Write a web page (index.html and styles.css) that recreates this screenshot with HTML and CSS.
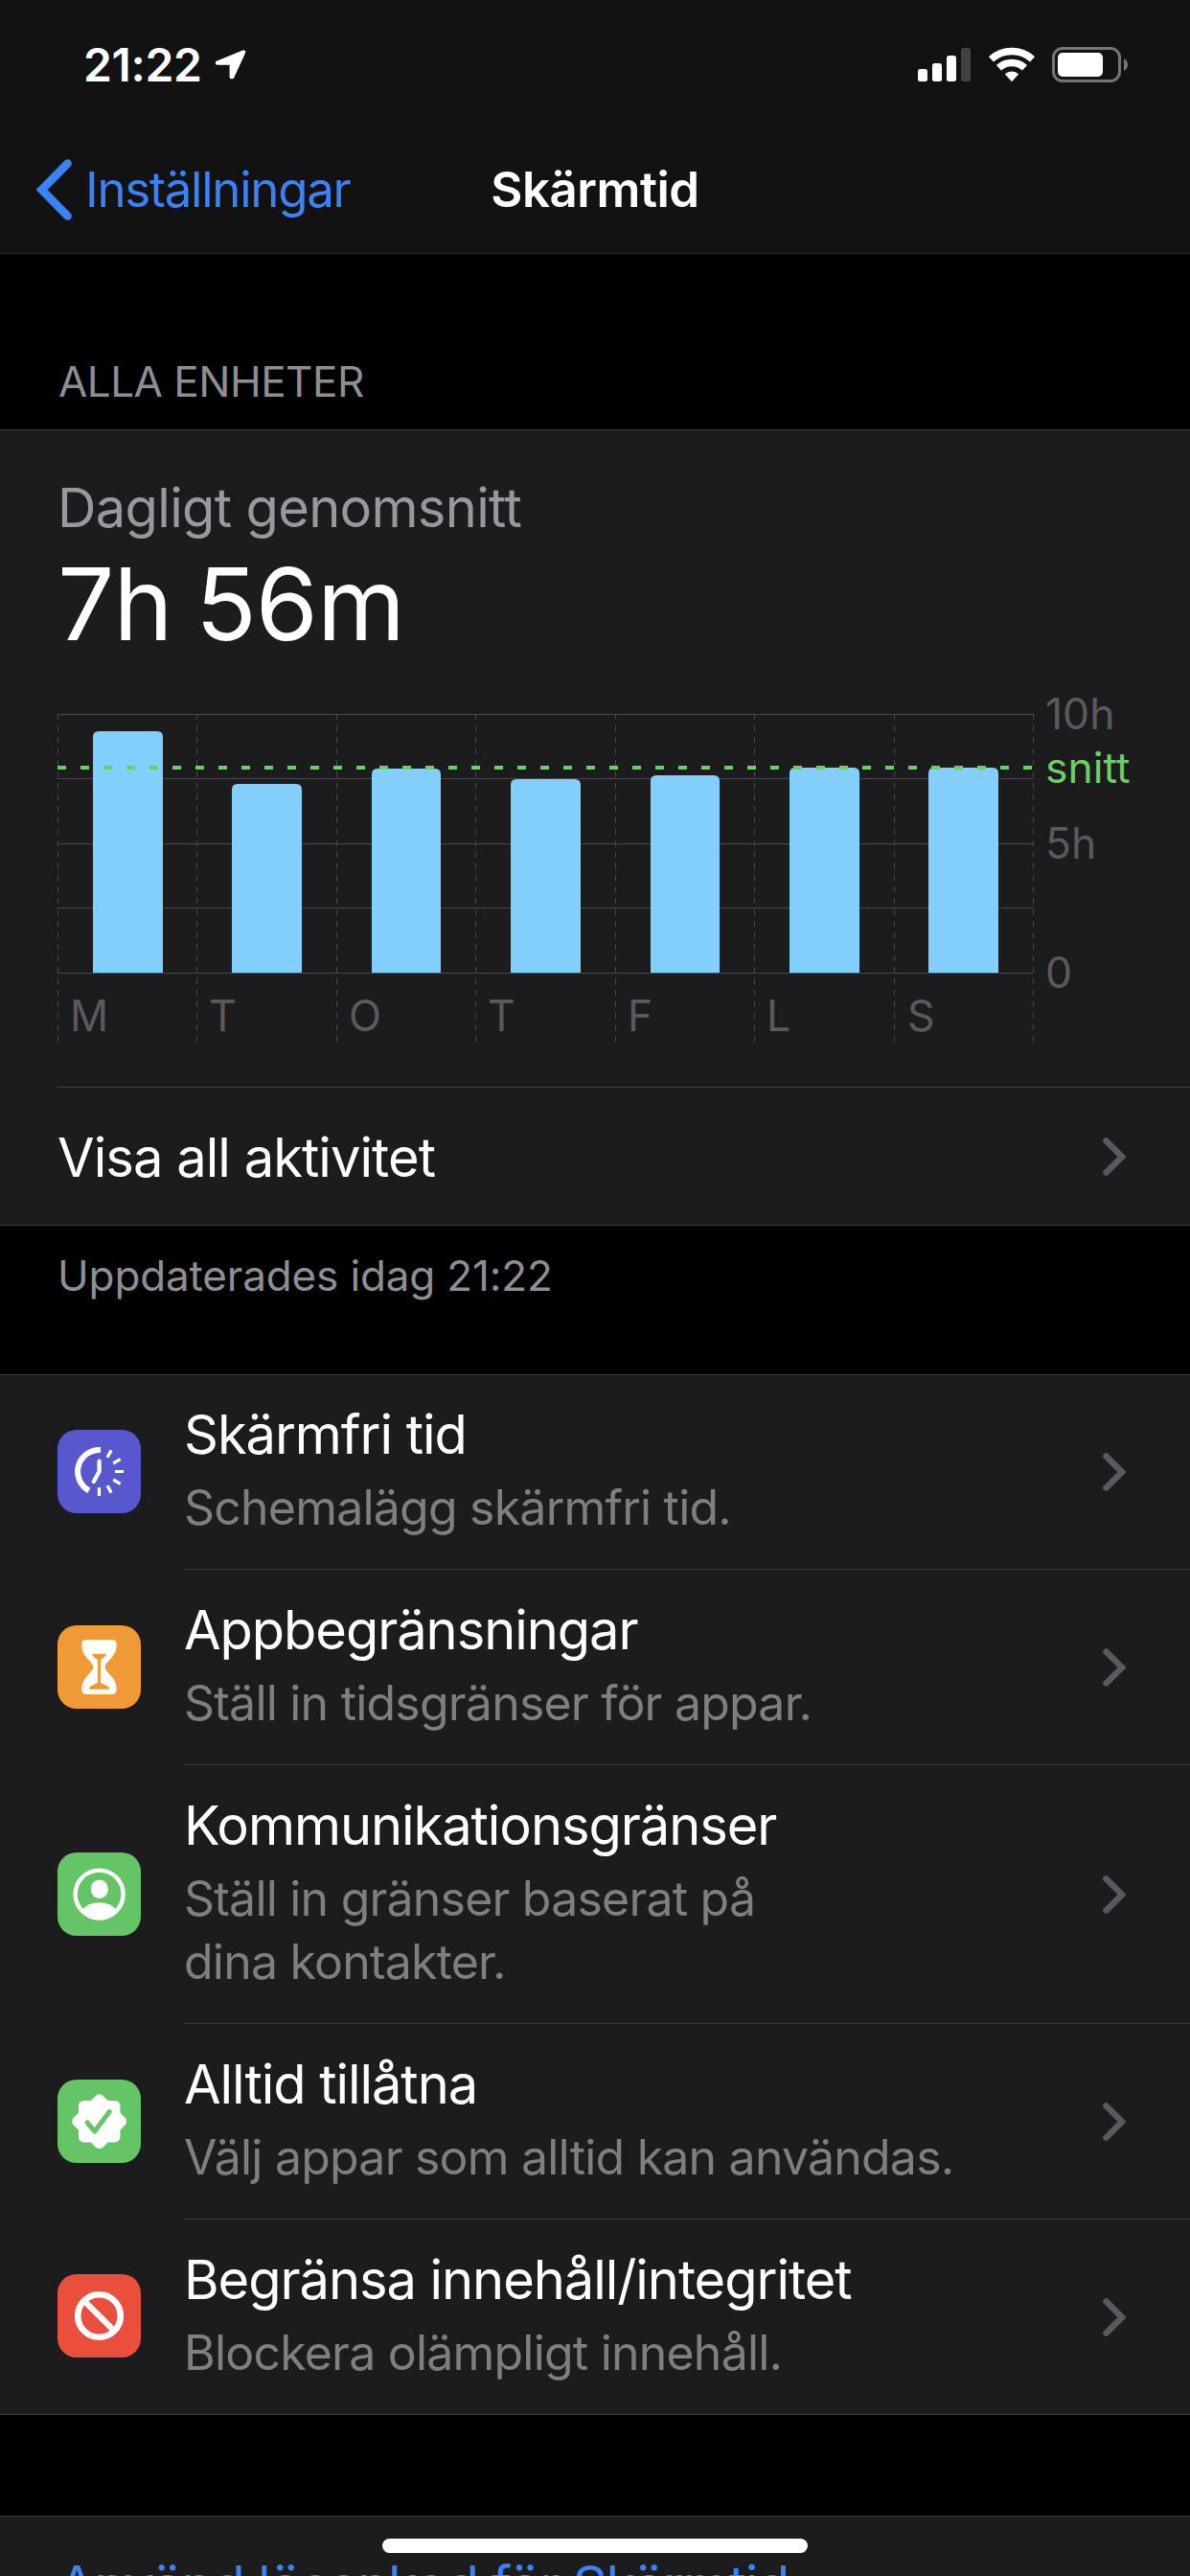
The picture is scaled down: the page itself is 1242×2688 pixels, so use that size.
FILE: index.html
```html
<!DOCTYPE html>
<html lang="sv">
<head>
  <meta charset="UTF-8" />
  <title>Skärmtid</title>
  <link rel="stylesheet" href="styles.css">
</head>
<body>
  <svg class="defs" width="0" height="0">
    <symbol id="chevron" viewBox="0 0 24 40">
      <path d="M3.5 3.5 20 20 3.5 36.5" fill="none" stroke="currentColor" stroke-width="6.6" stroke-linecap="round" stroke-linejoin="miter"/>
    </symbol>
  </svg>

  <header class="top">
    <div class="status-bar">
      <div class="status-left">
        <span class="time">21:22</span>
        <svg class="location" width="33" height="32" viewBox="0 0 33 32">
          <path d="M30 3 2.6 14.2V15H17.3V29.6H18.6L30.6 3.4Z" fill="#fff" stroke="#fff" stroke-width="3.4" stroke-linejoin="round"/>
        </svg>
      </div>
      <div class="status-right">
        <svg width="55" height="37" viewBox="0 0 55 37">
          <rect x="0" y="23" width="10" height="13" rx="2.5" fill="#fff"/>
          <rect x="15" y="17" width="10" height="19" rx="2.5" fill="#fff"/>
          <rect x="30" y="9" width="10" height="27" rx="2.5" fill="#fff"/>
          <rect x="45" y="1" width="10" height="35" rx="2.5" fill="#414141"/>
        </svg>
        <svg width="48" height="37" viewBox="0 0 48 37">
          <g fill="none" stroke="#fff" stroke-width="7.5">
            <path d="M2.4 12.8A32.2 32.2 0 0 1 45.6 12.8"/>
            <path d="M10.5 21.8A19.8 19.8 0 0 1 37.5 21.8"/>
          </g>
          <path d="M24 36.2 16.8 28.3A10.5 10.5 0 0 1 31.2 28.3Z" fill="#fff"/>
        </svg>
        <svg width="79" height="37" viewBox="0 0 79 37">
          <rect x="1.5" y="1.5" width="69" height="34" rx="9.5" fill="none" stroke="#757575" stroke-width="3"/>
          <rect x="6" y="6" width="47" height="25" rx="5" fill="#fff"/>
          <path d="M75 12.3Q79 14 79 18.5T75 24.9Z" fill="#757575"/>
        </svg>
      </div>
    </div>
    <nav class="nav-bar">
      <a class="back">
        <svg width="37" height="64" viewBox="0 0 37 64">
          <path d="M32.6 4.6 5.6 32 32.6 59.4" fill="none" stroke="currentColor" stroke-width="8.6" stroke-linecap="round" stroke-linejoin="miter"/>
        </svg>
        <span>Inställningar</span>
      </a>
      <h1 class="title">Skärmtid</h1>
    </nav>
  </header>

  <main>
    <h2 class="section-header">ALLA ENHETER</h2>

    <section class="group">
      <div class="summary">
        <p class="summary-label">Dagligt genomsnitt</p>
        <p class="summary-value">7h 56m</p>
        <svg class="chart" width="1182" height="370" viewBox="0 0 1182 370">
          <g class="grid">
            <path d="M0 25.5H1019M0 92.5H1019M0 160.5H1019M0 227.5H1019M0 295.5H1019"/>
            <path class="dashed" d="M.5 25V367M145.5 25V367M291.5 25V367M436.5 25V367M582.5 25V367M727.5 25V367M873.5 25V367M1018.5 25V367"/>
          </g>
          <g class="bars">
            <path d="M37 295V49q0-6 6-6h61q6 0 6 6V295z"/>
            <path d="M182 295V104q0-6 6-6h61q6 0 6 6V295z"/>
            <path d="M328 295V88q0-6 6-6h60q6 0 6 6V295z"/>
            <path d="M473 295V99q0-6 6-6h61q6 0 6 6V295z"/>
            <path d="M619 295V95q0-6 6-6h60q6 0 6 6V295z"/>
            <path d="M764 295V87q0-6 6-6h61q6 0 6 6V295z"/>
            <path d="M909 295V87q0-6 6-6h61q6 0 6 6V295z"/>
          </g>
          <path class="average" d="M0 81H1019"/>
          <g class="labels">
            <text x="13" y="356">M</text>
            <text x="158" y="356">T</text>
            <text x="304" y="356">O</text>
            <text x="449" y="356">T</text>
            <text x="595" y="356">F</text>
            <text x="740" y="356">L</text>
            <text x="887" y="356">S</text>
            <text x="1031" y="41">10h</text>
            <text x="1031" y="97" class="average-label">snitt</text>
            <text x="1031" y="176">5h</text>
            <text x="1031" y="311">0</text>
          </g>
        </svg>
      </div>
      <a class="row activity">
        <span class="row-title">Visa all aktivitet</span>
        <svg class="chevron"><use href="#chevron"/></svg>
      </a>
    </section>
    <p class="section-footer">Uppdaterades idag 21:22</p>

    <section class="group list">
      <a class="row">
        <svg class="icon purple" viewBox="0 0 87 87">
          <path d="M45 21.05A22.5 22.5 0 0 0 32.9 63.3" fill="none" stroke="#fff" stroke-width="6"/>
          <path d="M43.6 32.5V43.5L37.8 54" fill="none" stroke="#fff" stroke-width="4.2" stroke-linecap="round" stroke-linejoin="round"/>
          <path d="M52 28.8 56.2 21.4M58.2 35 65.6 30.7M60 43.5H69M58.2 52 65.6 56.3M52 58.2 56.2 65.6M43.5 60.3V69" stroke="#fff" stroke-width="3.2"/>
        </svg>
        <div class="row-body">
          <div class="row-text">
            <span class="row-title">Skärmfri tid</span>
            <span class="row-sub">Schemalägg skärmfri tid.</span>
          </div>
          <svg class="chevron"><use href="#chevron"/></svg>
        </div>
      </a>
      <a class="row">
        <svg class="icon orange" viewBox="0 0 87 87">
          <path d="M30 15H57Q61.7 15 61.7 20C61.7 34 50 37 49.7 43.5 50 50 61.7 53 61.7 67Q61.7 72 57 72H30Q25.3 72 25.3 67C25.3 53 37 50 37.3 43.5 37 37 25.3 34 25.3 20Q25.3 15 30 15Z" fill="#fff"/>
          <path d="M36 29.7H51Q50 33 45 36V60L52.5 63.5Q54 64.5 54 66.8H33Q33 64.5 34.5 63.5L42 60V36Q37 33 36 29.7Z" fill="#f09a37"/>
        </svg>
        <div class="row-body">
          <div class="row-text">
            <span class="row-title">Appbegränsningar</span>
            <span class="row-sub">Ställ in tidsgränser för appar.</span>
          </div>
          <svg class="chevron"><use href="#chevron"/></svg>
        </div>
      </a>
      <a class="row tall">
        <svg class="icon green" viewBox="0 0 87 87">
          <circle cx="43.6" cy="43.6" r="25" fill="none" stroke="#fff" stroke-width="4.4"/>
          <ellipse cx="43.8" cy="38.3" rx="9.1" ry="9.8" fill="#fff"/>
          <path d="M25.5 60Q32 52.2 43.6 52.2T61.7 60A25 25 0 0 1 25.5 60Z" fill="#fff"/>
        </svg>
        <div class="row-body">
          <div class="row-text">
            <span class="row-title">Kommunikationsgränser</span>
            <span class="row-sub">Ställ in gränser baserat på<br>dina kontakter.</span>
          </div>
          <svg class="chevron"><use href="#chevron"/></svg>
        </div>
      </a>
      <a class="row">
        <svg class="icon green" viewBox="0 0 87 87">
          <rect x="22" y="22" width="43.4" height="43.4" rx="5.5" fill="#fff"/>
          <rect x="22" y="22" width="43.4" height="43.4" rx="5.5" fill="#fff" transform="rotate(45 43.7 43.7)"/>
          <path d="M31 44.8 38.8 54 54.2 33.6" fill="none" stroke="#65c466" stroke-width="5" stroke-linecap="round" stroke-linejoin="round"/>
        </svg>
        <div class="row-body">
          <div class="row-text">
            <span class="row-title">Alltid tillåtna</span>
            <span class="row-sub">Välj appar som alltid kan användas.</span>
          </div>
          <svg class="chevron"><use href="#chevron"/></svg>
        </div>
      </a>
      <a class="row">
        <svg class="icon red" viewBox="0 0 87 87">
          <circle cx="43.5" cy="43.5" r="22.3" fill="none" stroke="#fff" stroke-width="6.6"/>
          <path d="M27.7 27.7 59.3 59.3" stroke="#fff" stroke-width="6.2"/>
        </svg>
        <div class="row-body">
          <div class="row-text">
            <span class="row-title">Begränsa innehåll/integritet</span>
            <span class="row-sub">Blockera olämpligt innehåll.</span>
          </div>
          <svg class="chevron"><use href="#chevron"/></svg>
        </div>
      </a>
    </section>

    <section class="group passcode">
      <a class="passcode-link">Använd lösenkod för Skärmtid</a>
    </section>
  </main>

  <div class="home-indicator"></div>
</body>
</html>
```

FILE: styles.css
```css
* {
  box-sizing: border-box;
}

html, body {
  margin: 0;
  padding: 0;
}

body {
  width: 1242px;
  height: 2688px;
  overflow: hidden;
  position: relative;
  background: #000;
  color: #fff;
  font-family: Inter, "Liberation Sans", sans-serif;
}

h1, h2, p {
  margin: 0;
  font-weight: 400;
}

svg {
  display: block;
  flex-shrink: 0;
}

.defs {
  position: absolute;
}

.top {
  height: 265px;
  background: #121212;
  border-bottom: 1px solid #29292a;
}

.status-bar {
  height: 132px;
  display: flex;
  justify-content: space-between;
  align-items: flex-start;
  padding: 0 65px 0 87px;
}

.status-left {
  display: flex;
  gap: 13px;
}

.time {
  font-size: 48px;
  line-height: 135px;
  font-weight: 600;
  letter-spacing: -0.35px;
}

.location {
  margin-top: 51px;
}

.status-right {
  display: flex;
  gap: 18.5px;
  padding-top: 49px;
}

.nav-bar {
  height: 132px;
  display: grid;
  grid-template-columns: 1fr auto 1fr;
  align-items: center;
  padding-bottom: 1px;
  font-size: 51px;
}

.back {
  display: flex;
  align-items: center;
  gap: 14px;
  padding-left: 38px;
  color: #3b82f7;
  letter-spacing: -1.25px;
}

.title {
  font-size: 51px;
  font-weight: 600;
  letter-spacing: -0.5px;
}

.section-header {
  padding: 106px 61px 23px;
  font-size: 44px;
  line-height: 54px;
  letter-spacing: -0.5px;
  color: #8e8e93;
}

.section-footer {
  height: 155px;
  padding: 25px 60px 0;
  font-size: 44px;
  line-height: 54px;
  letter-spacing: -0.15px;
  color: #8e8e93;
}

.group {
  background: #1c1c1e;
  border-top: 1px solid #3d3d41;
  border-bottom: 1px solid #3d3d41;
}

.summary {
  padding: 47px 0 44px 60px;
}

.summary-label {
  font-size: 56px;
  line-height: 68px;
  letter-spacing: -0.66px;
  color: #98989f;
}

.summary-value {
  margin-top: 8px;
  font-size: 105px;
  line-height: 116px;
  letter-spacing: -1px;
  word-spacing: -4px;
}

/* weekly chart */
.chart {
  margin-top: 32px;
}

.grid {
  fill: none;
  stroke: #48484a;
  stroke-width: 1;
}

.dashed {
  stroke-dasharray: 6 6;
}

.bars {
  fill: #82cffd;
}

.average {
  stroke: #6bce67;
  stroke-width: 4;
  stroke-dasharray: 9 15;
}

.labels {
  font-size: 44.5px;
  fill: #5a5a5e;
}

.average-label {
  fill: #6bd067;
}

/* rows */
.row {
  display: flex;
  align-items: center;
  height: 204px;
  padding-left: 60px;
}

.activity {
  height: 144px;
  margin-left: 60px;
  padding: 0 67px 0 0;
  justify-content: space-between;
  border-top: 1px solid #3d3d41;
}

.activity .row-title {
  padding-top: 2px;
  letter-spacing: -0.95px;
}

.list .row:first-child {
  height: 203px;
}

.list .row.tall {
  height: 270px;
}

.row-body {
  flex: 1;
  height: 100%;
  margin-left: 45px;
  padding: 0 67px 0 0;
  display: flex;
  align-items: center;
  justify-content: space-between;
  border-bottom: 1px solid #3a3a3c;
}

.list .row:last-child,
.list .row:last-child .row-body {
  height: 203px;
  border-bottom: none;
}

.row-text {
  display: flex;
  flex-direction: column;
  gap: 10px;
  padding-bottom: 2px;
}

.row-title {
  font-size: 56px;
  line-height: 66px;
  letter-spacing: -1.05px;
}

.row-sub {
  font-size: 50px;
  line-height: 66px;
  letter-spacing: -0.79px;
  color: #7f7f7f;
}

.chevron {
  width: 24px;
  height: 40px;
  color: #5a5a5e;
}

.icon {
  width: 87px;
  height: 87px;
  margin-bottom: 2px;
  border-radius: 20px;
}

.purple {
  background: #5957ce;
}

.orange {
  background: #f09a37;
}

.green {
  background: #65c466;
}

.red {
  background: #ea4e3d;
}

.passcode {
  margin-top: 105px;
  height: 120px;
  padding: 38px 61px 0;
}

.passcode-link {
  font-size: 56px;
  line-height: 68px;
  letter-spacing: -1.25px;
  color: #3b82f7;
}

.home-indicator {
  position: absolute;
  left: 399px;
  bottom: 24px;
  width: 444px;
  height: 15px;
  border-radius: 8px;
  background: #fff;
}
```
